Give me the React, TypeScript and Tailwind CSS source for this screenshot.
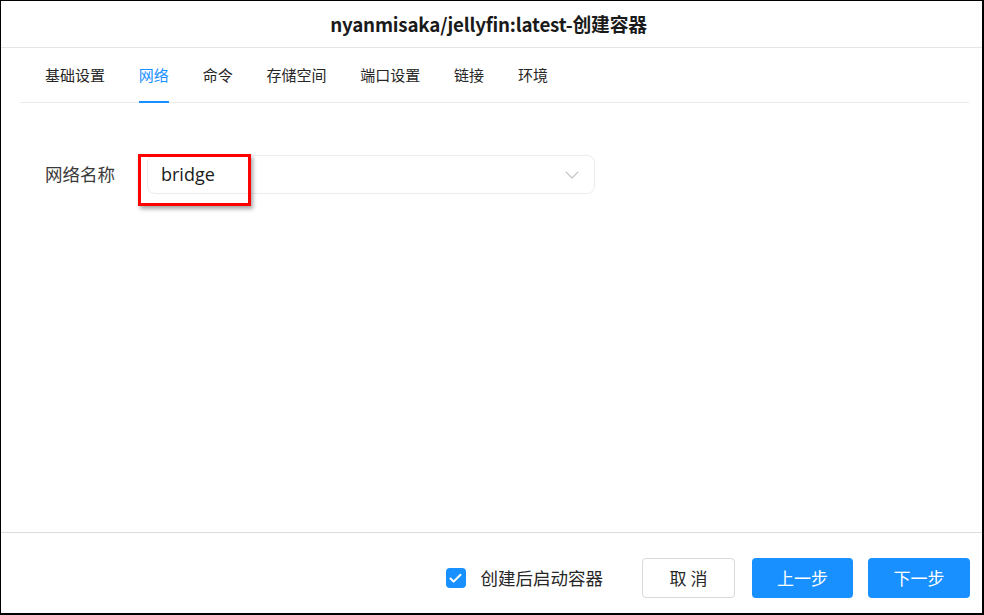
import { ChevronDown, Check } from "lucide-react"

const tabs = ["基础设置", "网络", "命令", "存储空间", "端口设置", "链接", "环境"]

export default function App() {
  return (
    <div
      className="w-[984px] h-[615px] bg-white flex flex-col border-t border-l border-r-2 border-b-2 border-black text-[#262626]"
      style={{ fontFamily: '"Noto Sans CJK SC", "Noto Sans", sans-serif' }}
    >
      {/* Title */}
      <div className="h-[47px] shrink-0 flex items-center justify-center border-b border-[#e5e5e5]">
        <h1 className="text-[18.8px] font-bold text-[#1a1a1a] tracking-[-0.2px] pr-[6px]">
          nyanmisaka/jellyfin:latest-创建容器
        </h1>
      </div>

      {/* Tabs */}
      <div className="mx-[19px] mr-[13px] h-[55px] shrink-0 flex items-stretch border-b border-[#ebebeb] pl-[25px] gap-[33.8px]">
        {tabs.map((t, i) => (
          <div
            key={t}
            className={`relative flex items-center text-[15px] ${
              i === 1 ? "text-[#1890ff]" : "text-[#262626]"
            }`}
          >
            {t}
            {i === 1 && (
              <span className="absolute left-0 right-0 bottom-[-1px] h-[2px] bg-[#1890ff]" />
            )}
          </div>
        ))}
      </div>

      {/* Form */}
      <div className="flex-1 pt-[52px] pl-[44px]">
        <div className="flex items-center gap-[31px]">
          <label className="text-[17.5px] text-[#3a3a3a] w-[71px]">网络名称</label>
          <div className="relative w-[448px] h-[39px] rounded-[8px] border border-[#ececec] flex items-center justify-between pl-[13px] pr-[10px]">
            <span className="text-[18px] text-[#1a1a1a]" style={{ fontFamily: '"Open Sans", "Noto Sans CJK SC", sans-serif' }}>
              bridge
            </span>
            <ChevronDown className="w-[24px] h-[24px] text-[#c4c4c4]" strokeWidth={1.1} />
            {/* annotation */}
            <div className="absolute left-[-10px] top-[-2px] w-[113px] h-[52px] border-[3px] border-[#ff0000] shadow-[2px_3px_4px_rgba(0,0,0,0.35)]" />
          </div>
        </div>
      </div>

      {/* Footer */}
      <div className="h-[81px] shrink-0 border-t border-[#dcdcdc] flex items-center justify-end pr-[12px] pt-[10px]">
        <label className="flex items-center mr-[39px]">
          <span className="w-[20px] h-[20px] rounded-[4px] bg-[#1890ff] flex items-center justify-center">
            <Check className="w-[15px] h-[15px] text-white" strokeWidth={3.2} />
          </span>
          <span className="ml-[15px] text-[17.5px] text-[#262626]">创建后启动容器</span>
        </label>
        <button className="w-[93px] h-[40px] rounded-[4px] border border-[#d9d9d9] bg-white text-[17px] text-[#262626] tracking-[4px] pl-[4px]">
          取消
        </button>
        <button className="ml-[17px] w-[101px] h-[40px] rounded-[4px] bg-[#1890ff] text-white text-[17px]">
          上一步
        </button>
        <button className="ml-[15px] w-[102px] h-[40px] rounded-[4px] bg-[#1890ff] text-white text-[17px]">
          下一步
        </button>
      </div>
    </div>
  )
}
